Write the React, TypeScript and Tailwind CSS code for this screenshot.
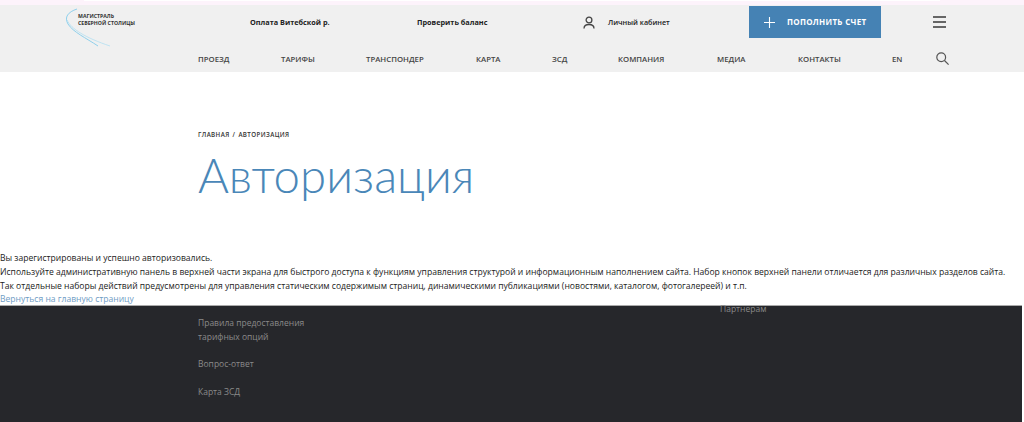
const navItems = ["ПРОЕЗД", "ТАРИФЫ", "ТРАНСПОНДЕР", "КАРТА", "ЗСД", "КОМПАНИЯ", "МЕДИА", "КОНТАКТЫ"];
const navWidths = ["w-[83px]", "w-[85px]", "w-[110px]", "w-[76px]", "w-[66px]", "w-[99px]", "w-[81px]", "w-[94px]"];

function Logo() {
  return (
    <div className="flex items-start w-[198px] pl-[66px] pt-[3px] h-[34px]">
      <svg width="46" height="40" viewBox="0 0 46 40" fill="none" className="shrink-0">
        <path d="M11 1C2 4 -2 9 2 16C7 24 20 30 32 38" stroke="#8fd0ec" strokeWidth="1" />
        <path d="M1 12C5 21 20 30 44 38" stroke="#a9dcf2" strokeWidth="0.7" />
      </svg>
      <div className="ml-[-34px] mt-[5px] text-[5.2px] leading-[7px] font-bold text-[#333] whitespace-nowrap">
        <div>МАГИСТРАЛЬ</div>
        <div>СЕВЕРНОЙ СТОЛИЦЫ</div>
      </div>
    </div>
  );
}

export default function App() {
  return (
    <div className="w-[1024px] h-[422px] overflow-hidden bg-white font-['Open_Sans',sans-serif] text-[#222]">
      <div className="h-[5px] bg-[#fdf3fb]">
        <div className="mx-[84px] h-[1px] bg-white" />
      </div>
      <header className="h-[67px] bg-[#f0f0f0] flex flex-col">
        <div className="h-[34px] flex items-center">
          <Logo />
          <a className="ml-[52px] w-[167px] text-[7.3px] font-bold">Оплата Витебской р.</a>
          <a className="w-[166px] text-[7.3px] font-bold">Проверить баланс</a>
          <svg width="12" height="13" viewBox="0 0 12 13" fill="none" stroke="#444" strokeWidth="1.3" className="shrink-0">
            <circle cx="6" cy="4" r="2.9" />
            <path d="M1 12.5C1 9.5 3 8.5 6 8.5C9 8.5 11 9.5 11 12.5" />
          </svg>
          <a className="ml-[13px] w-[141px] text-[7.2px] font-semibold">Личный кабинет</a>
          <button className="w-[132px] h-[32px] bg-[#4582b4] text-white flex items-center pl-[15px]">
            <svg width="11" height="11" viewBox="0 0 11 11" stroke="white" strokeWidth="1.1">
              <path d="M5.5 0V11M0 5.5H11" />
            </svg>
            <span className="ml-[12px] text-[8px] font-bold tracking-[0.3px]">ПОПОЛНИТЬ СЧЕТ</span>
          </button>
          <div className="ml-[52px] w-[13px] flex flex-col gap-[3px]">
            <span className="h-[2px] bg-[#666]" />
            <span className="h-[2px] bg-[#666]" />
            <span className="h-[2px] bg-[#666]" />
          </div>
        </div>
        <nav className="flex items-center pl-[198px] pt-[8px] h-[33px] text-[7.8px] font-semibold text-[#444]">
          {navItems.map((item, i) => (
            <a key={item} className={navWidths[i]}>{item}</a>
          ))}
          <a className="w-[44px]">EN</a>
          <svg width="13" height="13" viewBox="0 0 13 13" fill="none" stroke="#555" strokeWidth="1.2" className="mt-[-3px]">
            <circle cx="5.2" cy="5.2" r="4.4" />
            <path d="M8.5 8.5L12.6 12.6" />
          </svg>
        </nav>
      </header>

      <section className="h-[179px] pl-[198px] pt-[58px]">
        <div className="text-[6.2px] leading-[9px] font-semibold tracking-[0.4px] [word-spacing:1px] text-[#333]">ГЛАВНАЯ / АВТОРИЗАЦИЯ</div>
        <h1 className="mt-[6px] text-[47.4px] leading-[60px] font-light text-[#4a87b8] font-['Lato',sans-serif]">Авторизация</h1>
      </section>

      <main className="text-[8.57px] leading-[14px] h-[54px]">
        <div>Вы зарегистрированы и успешно авторизовались.</div>
        <div>Используйте административную панель в верхней части экрана для быстрого доступа к функциям управления структурой и информационным наполнением сайта. Набор кнопок верхней панели отличается для различных разделов сайта.</div>
        <div>Так отдельные наборы действий предусмотрены для управления статическим содержимым страниц, динамическими публикациями (новостями, каталогом, фотогалереей) и т.п.</div>
        <a className="block leading-[13px] text-[#6f9cc4]">Вернуться на главную страницу</a>
      </main>

      <footer className="h-[117px] w-[1022px] bg-[#26272b] border-t border-[#aaa] grid grid-cols-[198px_522px_1fr] text-[8.5px] text-[#8a8a8a]">
        <div />
        <div className="pt-[10px] leading-[14px]">
          <div>Правила предоставления</div>
          <div>тарифных опций</div>
          <div className="mt-[13px]">Вопрос-ответ</div>
          <div className="mt-[14px]">Карта ЗСД</div>
        </div>
        <div className="leading-[6px]">Партнерам</div>
      </footer>
    </div>
  );
}
